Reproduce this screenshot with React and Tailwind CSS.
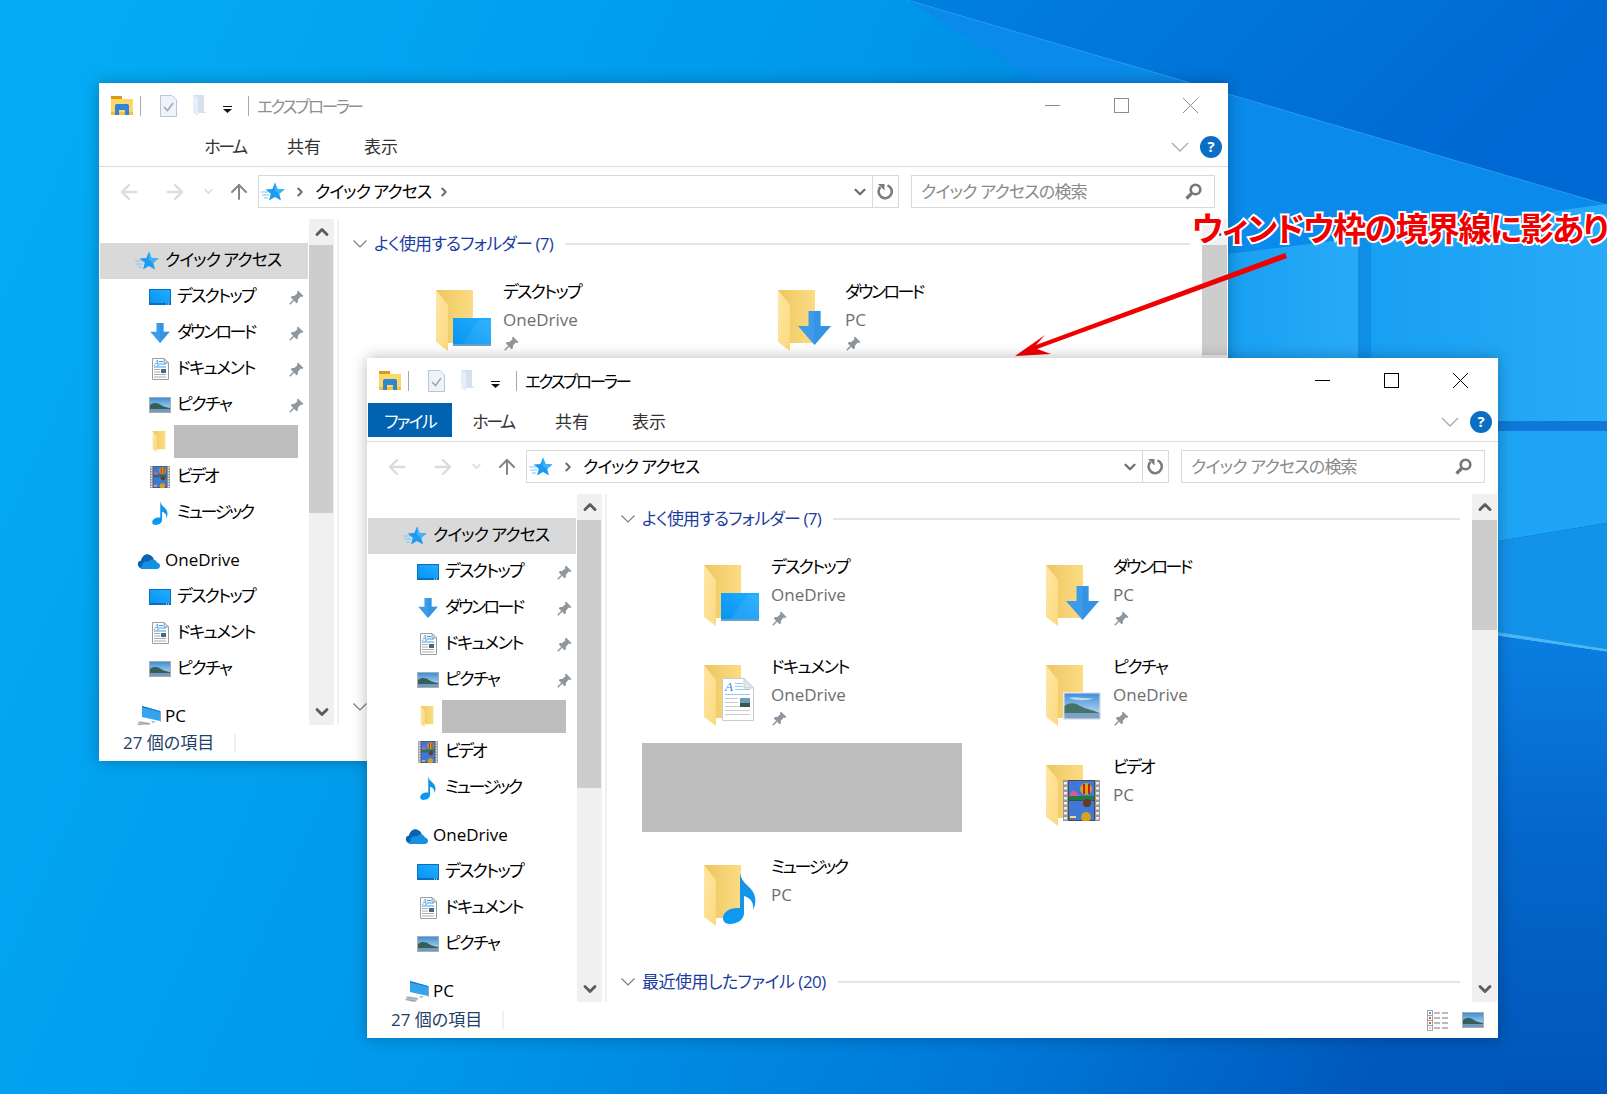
import React from "react";
import { ArrowLeft, ArrowRight, ArrowUp, ChevronDown, ChevronRight, ChevronUp } from "lucide-react";

const uiFont =
  "font-['Open_Sans','Noto_Sans_CJK_JP',sans-serif] [font-feature-settings:'palt']";

const labelFit = {
  "デスクトップ": "tracking-[-1.8px]",
  "ダウンロード": "tracking-[-2.5px]",
  "ドキュメント": "tracking-[-1.5px]",
  "ピクチャ": "tracking-[-1.5px]",
  "ビデオ": "tracking-[-2.2px]",
  "ミュージック": "tracking-[-2.4px]",
  "クイック アクセス": "tracking-[-1px]",
};

/* Shared gradients, referenced by every icon on the page */
function Gradients() {
  return (
    <svg className="absolute h-0 w-0">
      <defs>
        <linearGradient id="flap" x1="0" y1="0" x2="1" y2="1">
          <stop offset="0" stopColor="#ffe7a6" />
          <stop offset="1" stopColor="#fbd97f" />
        </linearGradient>
        <linearGradient id="back" x1="0" y1="0" x2="1" y2="0">
          <stop offset="0" stopColor="#eec660" />
          <stop offset="1" stopColor="#fbdc84" />
        </linearGradient>
        <linearGradient id="screen" x1="0" y1="1" x2="1" y2="0">
          <stop offset="0" stopColor="#0794f2" />
          <stop offset="1" stopColor="#22adff" />
        </linearGradient>
        <linearGradient id="sky" x1="0" y1="0" x2="0" y2="1">
          <stop offset="0" stopColor="#3f8fd8" />
          <stop offset="1" stopColor="#cfe6f2" />
        </linearGradient>
        <linearGradient id="note" x1="0" y1="0" x2="0" y2="1">
          <stop offset="0" stopColor="#1b8fe4" />
          <stop offset="1" stopColor="#089bf5" />
        </linearGradient>
        <linearGradient id="wall" x1="0" y1="0.2" x2="1" y2="0.5">
          <stop offset="0" stopColor="#04abf4" />
          <stop offset="0.45" stopColor="#0098ea" />
          <stop offset="0.78" stopColor="#0078d8" />
          <stop offset="1" stopColor="#0058bc" />
        </linearGradient>
        <linearGradient id="topdark" x1="0" y1="0" x2="1" y2="0.3">
          <stop offset="0" stopColor="#0080e0" />
          <stop offset="1" stopColor="#0068d2" />
        </linearGradient>
        <linearGradient id="pane" x1="0" y1="0" x2="1" y2="0">
          <stop offset="0" stopColor="#18a0f2" />
          <stop offset="1" stopColor="#28aaf8" />
        </linearGradient>
        <linearGradient id="lowerright" x1="0" y1="0" x2="0" y2="1">
          <stop offset="0" stopColor="#0a7ee2" />
          <stop offset="0.4" stopColor="#0568cc" />
          <stop offset="1" stopColor="#0056b8" />
        </linearGradient>
      </defs>
    </svg>
  );
}

function Wallpaper() {
  return (
    <svg className="absolute inset-0 h-full w-full" viewBox="0 0 1607 1094" preserveAspectRatio="none">
      <rect width="1607" height="1094" fill="url(#wall)" />
      {/* light rays from the logo */}
      <polygon points="907,0 1607,205 1607,0" fill="url(#topdark)" />
      <polygon points="907,0 1607,205 1607,210 1200,262 1100,120" fill="#0a8aea" />
      <line x1="907" y1="0" x2="1607" y2="205" stroke="#2a9cec" strokeWidth="1" />
      {/* logo panes */}
      <polygon points="1228,254 1358,238 1358,360 1228,360" fill="url(#pane)" />
      <polygon points="1371,236 1607,204 1607,421 1371,421" fill="url(#pane)" />
      <rect x="1358" y="238" width="13" height="130" fill="#0f8fe8" />
      <rect x="1498" y="421" width="109" height="10" fill="#0f78d8" />
      <polygon points="1498,431 1607,431 1607,523 1498,541" fill="#1ea4f4" />
      <polygon points="1498,541 1607,523 1607,649 1498,632" fill="#1392ea" />
      <polygon points="1498,632 1607,649 1607,652 1498,636" fill="#48b8f4" />
      <polygon points="1498,636 1607,652 1607,1094 1498,1094" fill="url(#lowerright)" />
    </svg>
  );
}

/* ---------- pictograms ---------- */

function Folder({ className = "h-[61px] w-[37px]" }) {
  return (
    <svg viewBox="0 0 37 61" className={className}>
      <path d="M0 0H37V53H12Z" fill="url(#back)" />
      <path d="M0 0L12 15V61L0 52Z" fill="url(#flap)" />
    </svg>
  );
}

function DesktopIcon({ className }) {
  return (
    <svg viewBox="0 0 38 28" className={className} preserveAspectRatio="none">
      <rect width="38" height="28" fill="url(#screen)" />
      <polygon points="10,26 26,2 38,2 38,26" fill="#fff" opacity="0.07" />
      <rect y="26" width="38" height="2" fill="#6d9fc6" />
    </svg>
  );
}

function DesktopSmall({ className }) {
  return (
    <svg viewBox="0 0 22 16" className={className}>
      <rect width="22" height="16" fill="#0b6fc0" />
      <rect x="1" y="1" width="20" height="13" fill="url(#screen)" />
      <rect x="17" y="14.5" width="1" height="1" fill="#fff" />
      <rect x="19" y="14.5" width="1" height="1" fill="#fff" />
    </svg>
  );
}

function DownloadIcon({ className }) {
  return (
    <svg viewBox="0 0 33 34" className={className}>
      <path d="M10.5 0H22.5V15H33L16.5 34L0 15H10.5Z" fill="#3d9be9" />
      <path d="M16.5 0H22.5V15H33L16.5 34Z" fill="#2d8ee2" opacity="0.6" />
    </svg>
  );
}

function DocIcon({ className }) {
  return (
    <svg viewBox="0 0 32 43" className={className}>
      <path d="M.5.5H22L31.5 10V42.5H.5Z" fill="#fff" stroke="#c8ccd0" />
      <path d="M22 .5V10H31.5Z" fill="#e4e6e8" stroke="#c8ccd0" />
      <text x="3" y="13" fontSize="13" fontStyle="italic" fontFamily="Liberation Serif" fill="#2f8fe0">A</text>
      <path d="M13 5.5H21M13 8.5H21M13 11.5H28M3 16.5H28" stroke="#9cc9ef" strokeWidth="1" />
      <path d="M3 20.5H16M3 24.5H16M3 28.5H28M3 32.5H28M3 36.5H28" stroke="#c9ccd0" strokeWidth="1" />
      <rect x="18" y="20" width="10" height="9" fill="#6f9db0" />
      <rect x="18" y="25" width="10" height="4" fill="#37584f" />
    </svg>
  );
}

function DocSmall({ className }) {
  return (
    <svg viewBox="0 0 17 22" className={className}>
      <path d="M.5.5H12L16.5 5V21.5H.5Z" fill="#fff" stroke="#9a9fa4" />
      <path d="M12 .5V5H16.5Z" fill="#e4e6e8" stroke="#9a9fa4" />
      <text x="2" y="7.5" fontSize="8" fontStyle="italic" fontFamily="Liberation Serif" fill="#1f86dd">A</text>
      <path d="M7 3.5H11M7 6H14M2 9H14" stroke="#3f9de8" strokeWidth="1" />
      <path d="M2 11.5H8M2 14H8M2 16.5H14M2 19H14" stroke="#a8adb2" strokeWidth="1" />
      <rect x="9" y="11" width="5" height="4" fill="#47697a" />
    </svg>
  );
}

function PictureIcon({ className }) {
  return (
    <svg viewBox="0 0 38 28" className={className} preserveAspectRatio="none">
      <rect width="38" height="28" fill="#e6e8ea" />
      <rect x="1.5" y="1.5" width="35" height="25" fill="url(#sky)" />
      <path d="M6 6C12 4 20 7 30 6C26 9 12 9 6 6Z" fill="#fff" opacity="0.6" />
      <path d="M1.5 14C7 10 12 11 17 14C23 17 30 18 36.5 21V22H1.5Z" fill="#45736a" />
      <rect x="1.5" y="21" width="35" height="5.5" fill="#7ba1c6" />
    </svg>
  );
}

function PictureSmall({ className }) {
  return (
    <svg viewBox="0 0 22 16" className={className}>
      <rect width="22" height="16" fill="#adadad" />
      <rect x="1" y="1" width="20" height="14" fill="url(#sky)" />
      <path d="M1 8C5 5 9 6 12 8C15 10 18 10 21 11V13H1Z" fill="#365f58" />
      <rect x="1" y="12" width="20" height="3" fill="#6f99c0" />
    </svg>
  );
}

function FilmIcon({ className }) {
  const holes = [2, 7, 12, 17, 22, 27, 32, 37];
  return (
    <svg viewBox="0 0 37 41" className={className}>
      <rect width="37" height="41" fill="#4a4a4a" />
      <rect width="5" height="41" fill="#9a9a9a" />
      <rect x="32" width="5" height="41" fill="#9a9a9a" />
      {holes.map((y) => (
        <g key={y} fill="#eee">
          <rect x="1" y={y} width="3" height="2.5" />
          <rect x="33" y={y} width="3" height="2.5" />
        </g>
      ))}
      <rect x="6" y="1" width="25" height="19" fill="#3f78d6" />
      <rect x="6" y="21" width="25" height="19" fill="#3f78d6" />
      <rect x="6" y="16" width="25" height="4" fill="#1f7a46" />
      <circle cx="23" cy="9" r="6" fill="#d9a01e" />
      <path d="M20 4h2v10h-2zM25 4h2v10h-2z" fill="#b3261e" />
      <path d="M7 14l3-4 3 2 3 4H7z" fill="#d65aa0" />
      <circle cx="24" cy="23" r="4" fill="#6a3a1e" />
      <circle cx="23" cy="37" r="5" fill="#d9a01e" />
      <path d="M7 36h6v2H7z" fill="#ffd966" />
    </svg>
  );
}

function NoteIcon({ className }) {
  return (
    <svg viewBox="0 0 33 51" className={className}>
      <path
        d="M17 0C18 7 22 10 27 15C33 21 34 29 30 37C31 30 28 25 21 23V40C21 47 14 51 7 51C2 51 0 48 0 45C0 39 7 35 14 35C15 35 16 35 17 35Z"
        fill="url(#note)"
      />
    </svg>
  );
}

function StarIcon({ className }) {
  return (
    <svg viewBox="0 0 24 20" className={className}>
      <path d="M0 10H7M1 13H8M3 16H7" stroke="#7cc6f8" strokeWidth="1.2" />
      <polygon
        points="14,0.5 16.6,7 23.5,7.4 18.2,11.8 20,18.6 14,14.9 8,18.6 9.8,11.8 4.5,7.4 11.4,7"
        fill="#1d9bf0"
      />
      <polygon points="14,0.5 16.6,7 23.5,7.4 18.2,11.8 14,9" fill="#3fb3f7" />
    </svg>
  );
}

function PinIcon({ className = "h-[15px] w-[15px]" }) {
  return (
    <svg viewBox="0 0 16 16" className={className}>
      <path
        d="M9.5 0.5L15.5 6.5L14 7.5L12.5 7L9.5 10.5L9.5 13L8 14L2 8L3 6.5L5.5 6.5L9 3.5L8.5 2Z"
        fill="#8f979e"
      />
      <path d="M5 11L0.8 15.2" stroke="#8f979e" strokeWidth="1.6" />
    </svg>
  );
}

function CloudIcon({ className }) {
  return (
    <svg viewBox="0 0 24 16" className={className}>
      <path d="M4 15C1 13 1 8 5 7.5C6 3 10 0 14 2C17 3.5 18 6 18 8L10 15Z" fill="#0a62b5" />
      <path d="M5 16H21C25 16 25 10 21 9.5C20 6 15 5.5 13 8.5C9 7 5 11 7 13C5 13 4 15 5 16Z" fill="#1491e0" />
    </svg>
  );
}

function PcIcon({ className }) {
  return (
    <svg viewBox="0 0 24 22" className={className}>
      <polygon points="5,0 23,5 23,15 5,11" fill="#35a4ec" />
      <polygon points="5,0 23,5 23,6 5,1.5" fill="#1c7bc4" />
      <polygon points="23,5 24,5.5 24,16 23,15" fill="#9aa2a8" />
      <polygon points="2,15 14,17 10,21.5 0,19" fill="#c3c8cc" />
      <path d="M2.5 16.5L12 18M1.5 18.5L10.5 20" stroke="#9aa0a4" strokeWidth="1" />
      <path d="M14 14.5L19 15.5L16 17.5Z" fill="#b8bdc1" />
    </svg>
  );
}

function AppIcon({ className }) {
  return (
    <svg viewBox="0 0 22 19" className={className}>
      <rect width="11" height="4" fill="#d89a10" />
      <rect y="3" width="22" height="16" fill="#fdd868" />
      <rect y="16" width="22" height="3" fill="#f2c33a" />
      <path d="M4 19V10C4 8.5 5 8 6 8H16C17 8 18 8.5 18 10V19H14V14H8V19Z" fill="#2f86d6" />
    </svg>
  );
}

function CheckDoc({ className }) {
  return (
    <svg viewBox="0 0 17 22" className={className}>
      <path d="M.5.5H12L16.5 5V21.5H.5Z" fill="#eef3f9" stroke="#b4c6dc" />
      <path d="M4 12L7.5 15.5L13 8" fill="none" stroke="#a3a8ad" strokeWidth="1.5" />
    </svg>
  );
}

function PaleFolder({ className }) {
  return (
    <svg viewBox="0 0 14 21" className={className}>
      <path d="M0 0H11V16L14 18H4Z" fill="#d6e1ef" />
      <path d="M0 0L5 3V21L0 18Z" fill="#e6eef7" />
    </svg>
  );
}

function SearchIcon({ className }) {
  return (
    <svg viewBox="0 0 17 17" className={className}>
      <circle cx="10.5" cy="6.5" r="4.8" fill="none" stroke="#777" strokeWidth="2.6" />
      <path d="M6.5 10.5L1.5 15.5" stroke="#777" strokeWidth="3.2" />
    </svg>
  );
}

function RefreshIcon({ className }) {
  return (
    <svg viewBox="0 0 17 17" className={className}>
      <path d="M10.5 2.4A6.6 6.6 0 1 1 3.4 4" fill="none" stroke="#7c7c7c" strokeWidth="2.6" />
      <path d="M1 1H7.5V7.5Z" fill="#7c7c7c" />
    </svg>
  );
}

function ListViewIcon({ className }) {
  const rows = [
    [2, "#4f9fd6"],
    [7, "#b8772a"],
    [12, "#d0622a"],
    [17, "#d8d0b0"],
  ];
  return (
    <svg viewBox="0 0 22 21" className={className}>
      {rows.map(([y, c]) => (
        <g key={y}>
          <rect x="0.5" y={y - 1.5} width="5" height="5" fill="#fff" stroke="#a5a5a5" />
          <rect x="2" y={y} width="2" height="2" fill={c} />
          <path d={`M7 ${y + 1}H13M15 ${y + 1}H21`} stroke="#777" strokeWidth="1" />
        </g>
      ))}
    </svg>
  );
}

/* ---------- data ---------- */

const quick = [
  { label: "デスクトップ", Icon: DesktopSmall, size: "h-[16px] w-[22px]", pin: true },
  { label: "ダウンロード", Icon: DownloadIcon, size: "h-[20px] w-[20px]", pin: true },
  { label: "ドキュメント", Icon: DocSmall, size: "h-[22px] w-[17px]", pin: true },
  { label: "ピクチャ", Icon: PictureSmall, size: "h-[16px] w-[22px]", pin: true },
  { hidden: true },
  { label: "ビデオ", Icon: FilmIcon, size: "h-[22px] w-[22px]" },
  { label: "ミュージック", Icon: NoteIcon, size: "h-[24px] w-[16px]" },
];

const cloud = [
  { label: "デスクトップ", Icon: DesktopSmall, size: "h-[16px] w-[22px]" },
  { label: "ドキュメント", Icon: DocSmall, size: "h-[22px] w-[17px]" },
  { label: "ピクチャ", Icon: PictureSmall, size: "h-[16px] w-[22px]" },
];

const folders = [
  { name: "デスクトップ", from: "OneDrive", pin: true, Icon: DesktopIcon, pos: "left-[17px] top-[28px] h-[28px] w-[38px]" },
  { name: "ダウンロード", from: "PC", pin: true, Icon: DownloadIcon, pos: "left-[20px] top-[21px] h-[34px] w-[33px]" },
  { name: "ドキュメント", from: "OneDrive", pin: true, Icon: DocIcon, pos: "left-[18px] top-[13px] h-[43px] w-[32px]" },
  { name: "ピクチャ", from: "OneDrive", pin: true, Icon: PictureIcon, pos: "left-[17px] top-[27px] h-[28px] w-[38px]" },
  { hidden: true },
  { name: "ビデオ", from: "PC", Icon: FilmIcon, pos: "left-[17px] top-[15px] h-[41px] w-[37px]" },
  { name: "ミュージック", from: "PC", Icon: NoteIcon, pos: "left-[19px] top-[8px] h-[51px] w-[33px]" },
];

/* ---------- window parts ---------- */

function NavChild({ item }) {
  const { label, Icon, size, pin, hidden } = item;
  if (hidden) {
    return (
      <div className="flex h-[36px] items-center pl-[52px]">
        <Folder className="h-[21px] w-[14px]" />
        <div className="ml-[8px] h-[33px] w-[124px] bg-[#bebebe]" />
      </div>
    );
  }
  return (
    <div className="flex h-[36px] items-center pl-[49px]">
      <div className="flex w-[22px] justify-center">
        <Icon className={size} />
      </div>
      <span className={`ml-[6px] -translate-y-[1px] whitespace-nowrap text-[17px] text-black ${labelFit[label]}`}>{label}</span>
      {pin && <PinIcon className="absolute left-[189px] h-[15px] w-[15px]" />}
    </div>
  );
}

function NavRoot({ icon, label, active }) {
  return (
    <div className={`flex h-[36px] items-center ${active ? "bg-[#d9d9d9]" : ""}`}>
      <div className="flex w-[61px] justify-end">{icon}</div>
      <span className={`ml-[4px] -translate-y-[1px] whitespace-nowrap text-[17px] text-black ${labelFit[label] ?? ""}`}>{label}</span>
    </div>
  );
}

function ScrollButton({ up }) {
  const Chevron = up ? ChevronUp : ChevronDown;
  return (
    <div className="flex h-[26px] items-center justify-center">
      <Chevron className="h-[20px] w-[20px] text-[#5c5c5c]" strokeWidth={3.4} />
    </div>
  );
}

function Sidebar() {
  return (
    <div className="flex w-[235px] shrink-0">
      <nav className="relative ml-[1px] h-full w-[209px] overflow-hidden pt-[24px]">
        <NavRoot active icon={<StarIcon className="mr-[2px] h-[20px] w-[24px]" />} label="クイック アクセス" />
        <div className="relative">
          {quick.map((item, i) => (
            <NavChild key={i} item={item} />
          ))}
        </div>
        <div className="mt-[12px]">
          <NavRoot icon={<CloudIcon className="h-[16px] w-[26px]" />} label="OneDrive" />
          {cloud.map((item, i) => (
            <NavChild key={i} item={item} />
          ))}
        </div>
        <div className="mt-[12px]">
          <NavRoot icon={<PcIcon className="h-[22px] w-[24px]" />} label="PC" />
        </div>
      </nav>
      <div className="ml-[1px] flex w-[25px] flex-col justify-between bg-[#f0f0f0]">
        <div>
          <ScrollButton up />
          <div className="h-[268px] w-[24px] bg-[#cdcdcd]" />
        </div>
        <ScrollButton />
      </div>
    </div>
  );
}

function GroupHeader({ label, fit, className }) {
  return (
    <div className={`flex h-[24px] items-center ${className}`}>
      <svg viewBox="0 0 14 8" className="ml-[14px] h-[8px] w-[14px]">
        <path d="M.5.5L7 7L13.5.5" fill="none" stroke="#7a7a7a" strokeWidth="1.1" />
      </svg>
      <span className={`ml-[7px] whitespace-nowrap text-[17px] text-[#1b3c9e] ${fit}`}>{label}</span>
      <div className="ml-[12px] mr-[12px] h-[2px] flex-1 bg-[#e5e5e5]" />
    </div>
  );
}

function FolderTile({ item }) {
  if (item.hidden) return <div className="h-[89px] w-[320px] bg-[#bebebe]" />;
  const { name, from, pin, Icon, pos } = item;
  return (
    <div className="flex h-full pl-[62px] pt-[22px]">
      <div className="relative h-[61px] w-[67px] shrink-0">
        <Folder />
        <Icon className={`absolute ${pos}`} />
      </div>
      <div className="-mt-[11px]">
        <div className={`h-[25px] whitespace-nowrap text-[17px] leading-[25px] text-black ${labelFit[name]}`}>{name}</div>
        <div className="mt-[3px] h-[25px] text-[17px] leading-[25px] text-[#6e6e6e]">{from}</div>
        {pin && <PinIcon className="ml-[1px] mt-[4px] h-[15px] w-[15px]" />}
      </div>
    </div>
  );
}

function ContentPane() {
  return (
    <div className="flex min-w-0 flex-1">
      <div className="ml-[3px] h-full w-[2px] bg-[#f0f0f0]" />
      <div className="min-w-0 flex-1 overflow-hidden">
        <GroupHeader label="よく使用するフォルダー (7)" fit="tracking-[-0.8px]" className="mt-[13px]" />
        <div className="ml-[35px] grid grid-cols-[342px_342px] auto-rows-[100px] pt-[12px]">
          {folders.map((f, i) => (
            <FolderTile key={i} item={f} />
          ))}
        </div>
        <GroupHeader label="最近使用したファイル (20)" fit="tracking-[-0.5px]" className="mt-[27px]" />
      </div>
      <div className="flex w-[25px] shrink-0 flex-col justify-between bg-[#f0f0f0]">
        <div>
          <ScrollButton up />
          <div className="h-[110px] bg-[#cdcdcd]" />
        </div>
        <ScrollButton />
      </div>
      <div className="w-[1px]" />
    </div>
  );
}

function TitleBar({ active }) {
  const stroke = active ? "#000" : "#8c8c8c";
  return (
    <div className="flex h-[45px] shrink-0 items-center">
      <AppIcon className="ml-[12px] h-[19px] w-[22px]" />
      <div className="ml-[7px] h-[20px] w-[1px] bg-[#a8a8a8]" />
      <CheckDoc className="ml-[19px] h-[22px] w-[17px]" />
      <PaleFolder className="ml-[16px] h-[21px] w-[14px]" />
      <svg viewBox="0 0 9 7" className="ml-[16px] mt-[7px] h-[7px] w-[9px]">
        <path d="M0 0H9V1H0ZM0 3H9L4.5 7Z" fill="#111" />
      </svg>
      <div className="ml-[16px] h-[20px] w-[1px] bg-[#a8a8a8]" />
      <span className={`ml-[8px] mt-[3px] whitespace-nowrap text-[16.5px] tracking-[-2.3px] ${active ? "text-black" : "text-[#8f8f8f]"}`}>エクスプローラー</span>
      <div className="ml-auto mr-[3px] flex">
        <div className="flex w-[69px] justify-center">
          <svg viewBox="0 0 15 15" className="h-[15px] w-[15px]">
            <path d="M0 7.5H15" stroke={stroke} />
          </svg>
        </div>
        <div className="flex w-[69px] justify-center">
          <svg viewBox="0 0 15 15" className="h-[15px] w-[15px]">
            <rect x=".5" y=".5" width="14" height="14" fill="none" stroke={stroke} />
          </svg>
        </div>
        <div className="flex w-[69px] justify-center">
          <svg viewBox="0 0 15 15" className="h-[15px] w-[15px]">
            <path d="M0 0L15 15M15 0L0 15" stroke={stroke} />
          </svg>
        </div>
      </div>
    </div>
  );
}

function RibbonTabs({ active }) {
  return (
    <div className="flex h-[39px] shrink-0 border-b border-[#dadbdc] pb-[4px] pl-[1px]">
      <div className={`flex w-[84px] items-center justify-center pt-[3px] text-[17px] tracking-[-1.8px] ${active ? "bg-[#0063b1] text-white" : ""}`}>
        {active ? "ファイル" : ""}
      </div>
      <div className="flex w-[82px] items-center justify-center pt-[3px] text-[17px] tracking-[-2.4px] text-[#333]">ホーム</div>
      <div className="flex w-[76px] items-center justify-center pt-[3px] text-[17px] text-[#333]">共有</div>
      <div className="flex w-[78px] items-center justify-center pt-[3px] text-[17px] text-[#333]">表示</div>
      <div className="ml-auto flex items-center pt-[3px]">
        <svg viewBox="0 0 18 10" className="h-[10px] w-[18px]">
          <path d="M1 1L9 9L17 1" fill="none" stroke="#adadad" strokeWidth="1.4" />
        </svg>
        <div className="ml-[11px] mr-[6px] flex h-[22px] w-[22px] items-center justify-center rounded-full bg-[#0a6fc4] text-[15px] font-bold text-white">
          ?
        </div>
      </div>
    </div>
  );
}

function AddressRow({ active }) {
  return (
    <div className="flex h-[52px] shrink-0 items-center pb-[3px] pr-[13px]">
      <ArrowLeft className="ml-[18px] h-[24px] w-[24px] text-[#dcdcdc]" strokeWidth={2.4} />
      <ArrowRight className="ml-[22px] h-[24px] w-[24px] text-[#dcdcdc]" strokeWidth={2.4} />
      <ChevronDown className="ml-[15px] h-[13px] w-[13px] text-[#dcdcdc]" strokeWidth={3} />
      <ArrowUp className="ml-[12px] h-[24px] w-[24px] text-[#858585]" strokeWidth={2} />
      <div className="ml-[7px] flex h-[33px] flex-1 items-center border border-[#d9d9d9]">
        <StarIcon className="ml-[2px] h-[20px] w-[24px]" />
        <ChevronRight className="ml-[8px] h-[14px] w-[14px] text-[#6e6e6e]" strokeWidth={3.4} />
        <span className="ml-[8px] whitespace-nowrap text-[17px] tracking-[-1px] text-black">クイック アクセス</span>
        {!active && <ChevronRight className="ml-[6px] h-[14px] w-[14px] text-[#6e6e6e]" strokeWidth={3.4} />}
        <ChevronDown className="ml-auto mr-[3px] h-[18px] w-[18px] text-[#6e6e6e]" strokeWidth={3} />
        <div className="flex h-full w-[26px] items-center justify-center border-l border-[#d9d9d9]">
          <RefreshIcon className="h-[17px] w-[17px]" />
        </div>
      </div>
      <div className="ml-[12px] flex h-[33px] w-[304px] items-center justify-between border border-[#d9d9d9] pl-[9px] pr-[12px]">
        <span className="whitespace-nowrap text-[17px] tracking-[-0.8px] text-[#8a8a8a]">クイック アクセスの検索</span>
        <SearchIcon className="h-[17px] w-[17px]" />
      </div>
    </div>
  );
}

function StatusBar({ active }) {
  return (
    <div className="flex h-[36px] shrink-0 items-center">
      <span className="ml-[24px] text-[17px] text-[#1e3f66]">27 個の項目</span>
      <div className="ml-[20px] h-[18px] w-[2px] bg-[#f0f0f0]" />
      {active && (
        <div className="ml-auto mr-[14px] flex items-center gap-[13px]">
          <ListViewIcon className="h-[21px] w-[22px]" />
          <PictureSmall className="h-[16px] w-[22px]" />
        </div>
      )}
    </div>
  );
}

function ExplorerWindow({ active, className }) {
  return (
    <section
      className={`absolute flex flex-col bg-white shadow-[0_0_14px_rgba(0,0,0,0.28)] ${uiFont} ${className}`}
    >
      <TitleBar active={active} />
      <RibbonTabs active={active} />
      <AddressRow active={active} />
      <div className="flex min-h-0 flex-1">
        <Sidebar />
        <ContentPane />
      </div>
      <StatusBar active={active} />
    </section>
  );
}

export default function App() {
  return (
    <main className="relative h-[1094px] w-[1607px] overflow-hidden bg-[#0090e0]">
      <Gradients />
      <Wallpaper />
      <ExplorerWindow className="left-[99px] top-[83px] h-[678px] w-[1129px]" />
      {/* callout arrow pointing at the shadow of the front window */}
      <svg className="absolute left-0 top-0 h-[1094px] w-[1607px]" viewBox="0 0 1607 1094">
        <polygon points="1285,253 1287,258 1037,349 1051,354 1015,356 1045,335 1036,345" fill="#f00000" />
      </svg>
      <ExplorerWindow active className="left-[367px] top-[358px] h-[680px] w-[1131px]" />
      <div
        className={`absolute left-[1192px] top-[208px] whitespace-nowrap text-[33px] font-bold leading-[42px] tracking-[-1.5px] text-[#f00000] [-webkit-text-stroke:4px_white] [paint-order:stroke_fill] ${uiFont}`}
      >
        ウィンドウ枠の境界線に影あり
      </div>
    </main>
  );
}
